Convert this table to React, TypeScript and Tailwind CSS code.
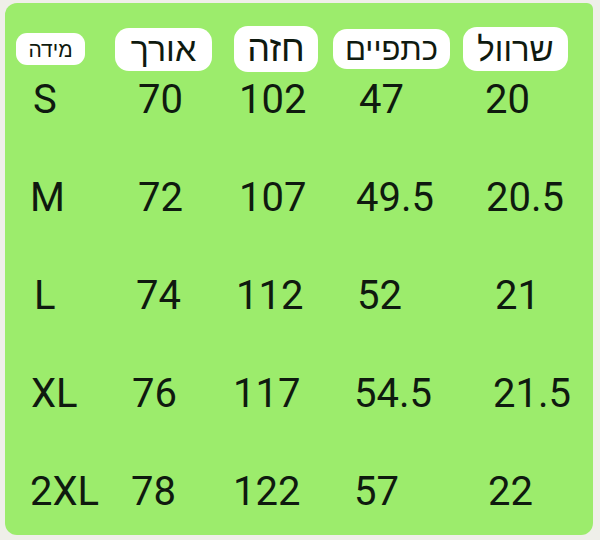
const heb = { fontFamily: '"Liberation Sans", "DejaVu Sans", sans-serif' }

const headers = [
  { label: "מידה", box: "w-[69px] h-[32px] ml-[11px] rounded-[11px] text-[21px]" },
  { label: "אורך", box: "w-[97px] h-[43px] ml-[30px] rounded-[14px] text-[34px]" },
  { label: "חזה", box: "w-[84px] h-[46px] ml-[22px] rounded-[14px] text-[36px]" },
  { label: "כתפיים", box: "w-[117px] h-[40px] ml-[15px] rounded-[14px] text-[31px]" },
  { label: "שרוול", box: "w-[105px] h-[44px] ml-[13px] rounded-[14px] text-[33px]" },
]

const rows = [
  [
    { v: "S", pl: "pl-[28px]" },
    { v: "70", pl: "pl-[13px]" },
    { v: "102", pl: "pl-[9px]" },
    { v: "47", pl: "pl-[14px]" },
    { v: "20", pl: "pl-[5px]" },
  ],
  [
    { v: "M", pl: "pl-[25px]" },
    { v: "72", pl: "pl-[13px]" },
    { v: "107", pl: "pl-[9px]" },
    { v: "49.5", pl: "pl-[11px]" },
    { v: "20.5", pl: "pl-[6px]" },
  ],
  [
    { v: "L", pl: "pl-[29px]" },
    { v: "74", pl: "pl-[11px]" },
    { v: "112", pl: "pl-[6px]" },
    { v: "52", pl: "pl-[12px]" },
    { v: "21", pl: "pl-[15px]" },
  ],
  [
    { v: "XL", pl: "pl-[26px]" },
    { v: "76", pl: "pl-[7px]" },
    { v: "117", pl: "pl-[3px]" },
    { v: "54.5", pl: "pl-[9px]" },
    { v: "21.5", pl: "pl-[13px]" },
  ],
  [
    { v: "2XL", pl: "pl-[25px]" },
    { v: "78", pl: "pl-[6px]" },
    { v: "122", pl: "pl-[3px]" },
    { v: "57", pl: "pl-[9px]" },
    { v: "22", pl: "pl-[8px]" },
  ],
]

export default function App() {
  return (
    <div className="w-[600px] h-[540px] bg-[#efefe9] pt-[3px] pl-[5px]">
      <div className="w-[588px] h-[532px] bg-[#9cec6c] rounded-[12px] rounded-tr-[6px] text-[#0f1a0f]">
        <div className="flex items-center h-[46px] pt-[23px] box-content">
          {headers.map((h) => (
            <div
              key={h.label}
              dir="rtl"
              style={heb}
              className={`bg-white flex items-center justify-center leading-none ${h.box}`}
            >
              {h.label}
            </div>
          ))}
        </div>
        <div className="flex flex-col gap-[42px]" style={{ fontFamily: "Roboto, 'Liberation Sans', sans-serif" }}>
          {rows.map((r, i) => (
            <div key={i} className="grid grid-cols-[120px_105px_115px_135px_1fr] h-[56px] items-center text-[40px] leading-none">
              {r.map((c, j) => (
                <div key={j} className={c.pl}>
                  {c.v}
                </div>
              ))}
            </div>
          ))}
        </div>
      </div>
    </div>
  )
}
